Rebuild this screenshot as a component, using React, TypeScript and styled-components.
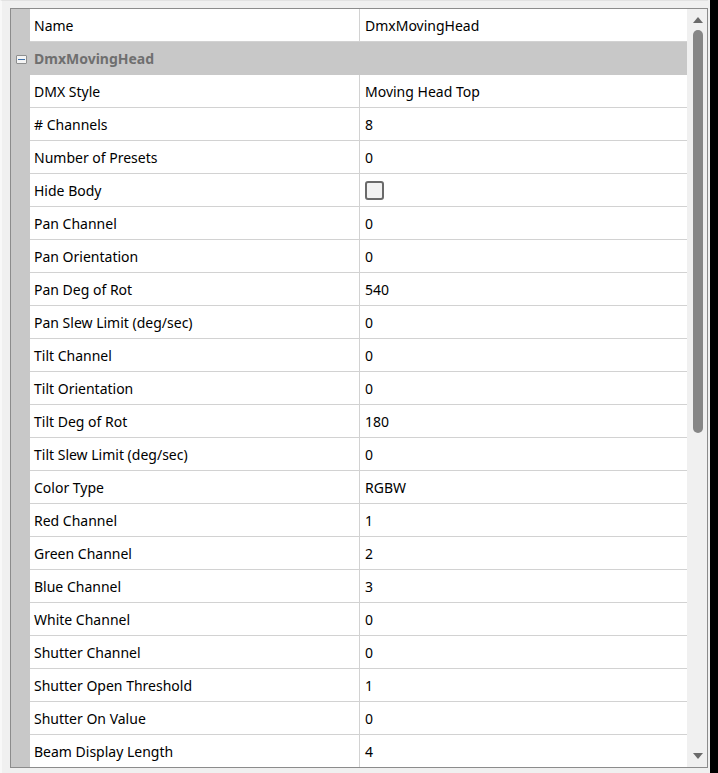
import React from 'react'
import styled, { createGlobalStyle } from 'styled-components'

const GlobalStyle = createGlobalStyle`
  html, body {
    margin: 0;
    padding: 0;
    background: #f0f0f0;
    font-family: "Noto Sans", "Open Sans", sans-serif;
  }
`

type Prop = {
  name: string
  value?: string
  checkbox?: boolean
}

const props: Prop[] = [
  { name: 'DMX Style', value: 'Moving Head Top' },
  { name: '# Channels', value: '8' },
  { name: 'Number of Presets', value: '0' },
  { name: 'Hide Body', checkbox: true },
  { name: 'Pan Channel', value: '0' },
  { name: 'Pan Orientation', value: '0' },
  { name: 'Pan Deg of Rot', value: '540' },
  { name: 'Pan Slew Limit (deg/sec)', value: '0' },
  { name: 'Tilt Channel', value: '0' },
  { name: 'Tilt Orientation', value: '0' },
  { name: 'Tilt Deg of Rot', value: '180' },
  { name: 'Tilt Slew Limit (deg/sec)', value: '0' },
  { name: 'Color Type', value: 'RGBW' },
  { name: 'Red Channel', value: '1' },
  { name: 'Green Channel', value: '2' },
  { name: 'Blue Channel', value: '3' },
  { name: 'White Channel', value: '0' },
  { name: 'Shutter Channel', value: '0' },
  { name: 'Shutter Open Threshold', value: '1' },
  { name: 'Shutter On Value', value: '0' },
  { name: 'Beam Display Length', value: '4' },
]

const Screen = styled.div`
  display: flex;
  width: 718px;
  height: 773px;
  overflow: hidden;
`

const Panel = styled.div`
  width: 708px;
  height: 773px;
  box-sizing: border-box;
  border-top: 1px solid #e2e2e2;
  border-left: 2px solid #f8f8f8;
  padding: 7px 0 0 8px;
  background: #f0f0f0;
`

const Edge = styled.div`
  flex: 1;
  background: #000;
  border-left: 2px solid #f0f0f0;
`

const Grid = styled.div`
  display: flex;
  width: 698px;
  height: 760px;
  box-sizing: border-box;
  border: 1px solid #8c8c8c;
  background: #fff;
  overflow: hidden;
`

const Rows = styled.div`
  width: 676px;
  display: flex;
  flex-direction: column;
  background: #c8c8c8;
`

const Row = styled.div<{ $category?: boolean }>`
  display: flex;
  height: 33px;
  flex-shrink: 0;
  box-sizing: border-box;
  padding-top: 1px;
  border-bottom: 1px solid ${(p) => (p.$category ? '#c8c8c8' : '#d2d2d2')};
  background: ${(p) => (p.$category ? '#c8c8c8' : '#fff')};
  font-size: 14px;
  color: #000;
`

const Margin = styled.div`
  width: 19px;
  flex-shrink: 0;
  margin: -1px 0 -1px;
  background: #c8c8c8;
  display: flex;
  align-items: center;
  justify-content: center;
`

const NameCell = styled.div`
  width: 330px;
  flex-shrink: 0;
  box-sizing: border-box;
  padding-left: 4px;
  margin-top: -1px;
  padding-top: 1px;
  border-right: 1px solid #d2d2d2;
  display: flex;
  align-items: center;
  white-space: nowrap;
`

const ValueCell = styled.div`
  flex: 1;
  padding-left: 5px;
  display: flex;
  align-items: center;
  white-space: nowrap;
`

const CategoryLabel = styled.div`
  padding-left: 4px;
  display: flex;
  align-items: center;
  font-weight: 700;
  color: #6f6f6f;
`

const Toggle = styled.div`
  width: 9px;
  height: 7px;
  margin-top: 1px;
  margin-left: 2px;
  border: 1px solid #8e8f8f;
  border-radius: 1px;
  background: #f4f4f4;
  display: flex;
  align-items: center;
  justify-content: center;

  &::after {
    content: '';
    width: 7px;
    height: 1px;
    background: #3c6fa8;
  }
`

const Check = styled.div`
  width: 15px;
  height: 15px;
  border: 2px solid #6a6a6a;
  border-radius: 3px;
  background: #f2f2f2;
`

const Scrollbar = styled.div`
  flex: 1;
  display: flex;
  flex-direction: column;
  align-items: center;
  background: #f0f0f0;
  padding: 8px 0 0 2px;
  box-sizing: border-box;
`

const Arrow = styled.div<{ $down?: boolean }>`
  width: 0;
  height: 0;
  border-left: 5px solid transparent;
  border-right: 5px solid transparent;
  ${(p) =>
    p.$down
      ? 'border-top: 6px solid #6a6a6a;'
      : 'border-bottom: 6px solid #6a6a6a;'}
`

const Thumb = styled.div`
  width: 10px;
  height: 403px;
  margin-top: 7px;
  border-radius: 5px;
  background: #868686;
`

const Spacer = styled.div`
  flex: 1;
`

const DownWrap = styled.div`
  padding-bottom: 8px;
`

export default function App() {
  return (
    <>
      <GlobalStyle />
      <Screen>
        <Panel>
          <Grid>
            <Rows>
              <Row>
                <Margin />
                <NameCell>Name</NameCell>
                <ValueCell>DmxMovingHead</ValueCell>
              </Row>
              <Row $category>
                <Margin>
                  <Toggle />
                </Margin>
                <CategoryLabel>DmxMovingHead</CategoryLabel>
              </Row>
              {props.map((p) => (
                <Row key={p.name}>
                  <Margin />
                  <NameCell>{p.name}</NameCell>
                  <ValueCell>{p.checkbox ? <Check /> : p.value}</ValueCell>
                </Row>
              ))}
            </Rows>
            <Scrollbar>
              <Arrow />
              <Thumb />
              <Spacer />
              <DownWrap>
                <Arrow $down />
              </DownWrap>
            </Scrollbar>
          </Grid>
        </Panel>
        <Edge />
      </Screen>
    </>
  )
}
